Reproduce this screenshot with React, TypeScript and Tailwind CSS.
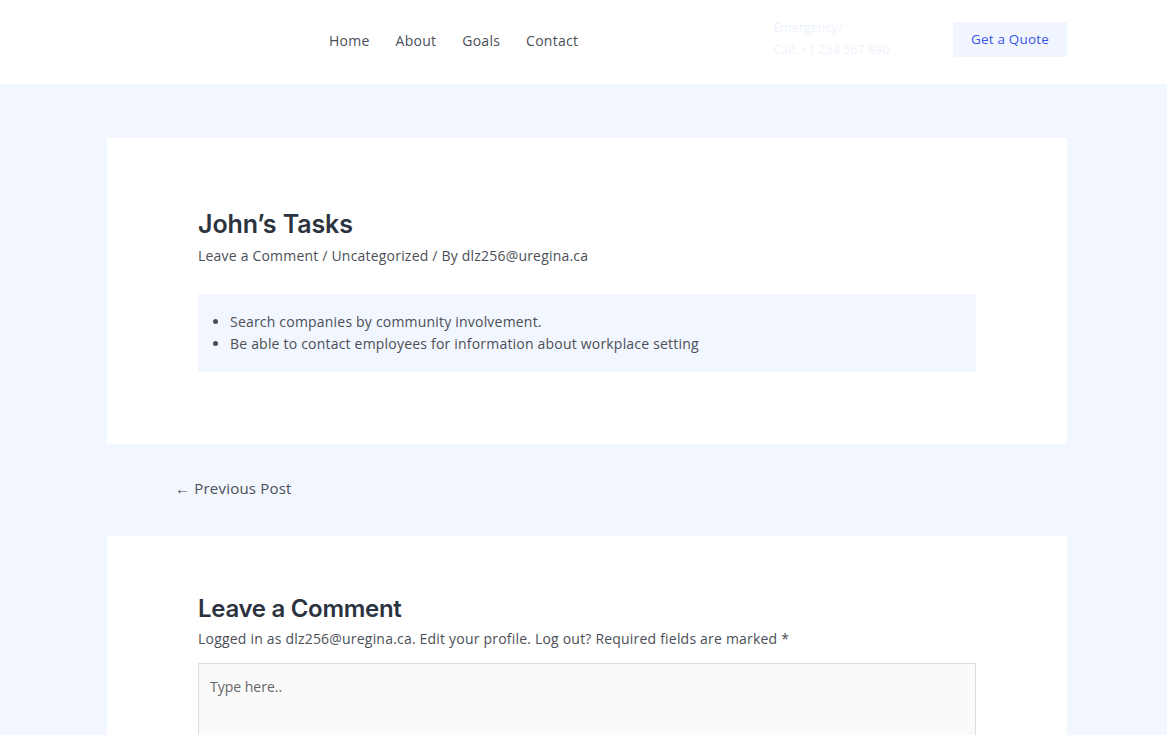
export default function App() {
  const font = { fontFamily: '"Open Sans", "Liberation Sans", sans-serif' };
  const head = { fontFamily: 'Inter, "Liberation Sans", sans-serif' };
  return (
    <div className="min-h-[735px] bg-[#f2f6fe] text-[#4b4f58]" style={font}>
      <header className="h-[84px] bg-white flex items-center">
        <nav className="flex items-center gap-[26px] ml-[329px] -mt-[4px] text-[14px] text-[#4b4f58] tracking-[0.25px]">
          <a>Home</a>
          <a>About</a>
          <a>Goals</a>
          <a>Contact</a>
        </nav>
        <div className="ml-[195px] flex flex-col text-[12.5px] leading-[22px] text-[#eef2fd] -mt-[7px]">
          <span>Emergency?</span>
          <span>Call: +1 234 567 890</span>
        </div>
        <button className="ml-auto mr-[100px] w-[114px] h-[35px] rounded-[2px] bg-[#f0f5ff] text-[#3a55e8] text-[13.5px] tracking-[0.2px] -mt-[6px]">
          Get a Quote
        </button>
      </header>

      <div className="w-[960px] ml-[107px] pt-[54px]">
        <article className="bg-white px-[91px] pt-[68px] pb-[72px]">
          <h1 className="text-[25px] font-semibold text-[#2c3340] leading-[36px] tracking-[-0.1px]" style={head}>
            John’s Tasks
          </h1>
          <p className="text-[14px] mt-[3px] tracking-[0.2px]">
            Leave a Comment / Uncategorized / By dlz256@uregina.ca
          </p>
          <div className="mt-[28px] bg-[#f2f6fe] py-[17px] px-[32px]">
            <ul className="list-disc text-[14px] leading-[22px] tracking-[0.2px]">
              <li>Search companies by community involvement.</li>
              <li>Be able to contact employees for information about workplace setting</li>
            </ul>
          </div>
        </article>

        <div className="h-[92px] flex items-center pl-[68px] pb-[4px] text-[15px] tracking-[0.2px]">
          <span>← Previous Post</span>
        </div>

        <section className="bg-white px-[91px] pt-[58px] pb-[40px]">
          <h2 className="text-[24px] font-semibold text-[#2c3340] leading-[30px] tracking-[-0.3px]" style={head}>
            Leave a Comment
          </h2>
          <p className="text-[14px] mt-[4px] tracking-[0.2px]">
            Logged in as dlz256@uregina.ca. Edit your profile. Log out? Required fields are marked *
          </p>
          <textarea
            placeholder="Type here.."
            className="mt-[14px] w-full h-[160px] bg-[#fafafa] border border-[#dddddd] px-[11px] py-[12px] text-[14px] placeholder:text-[#666] outline-none resize-none"
          />
        </section>
      </div>
    </div>
  );
}
